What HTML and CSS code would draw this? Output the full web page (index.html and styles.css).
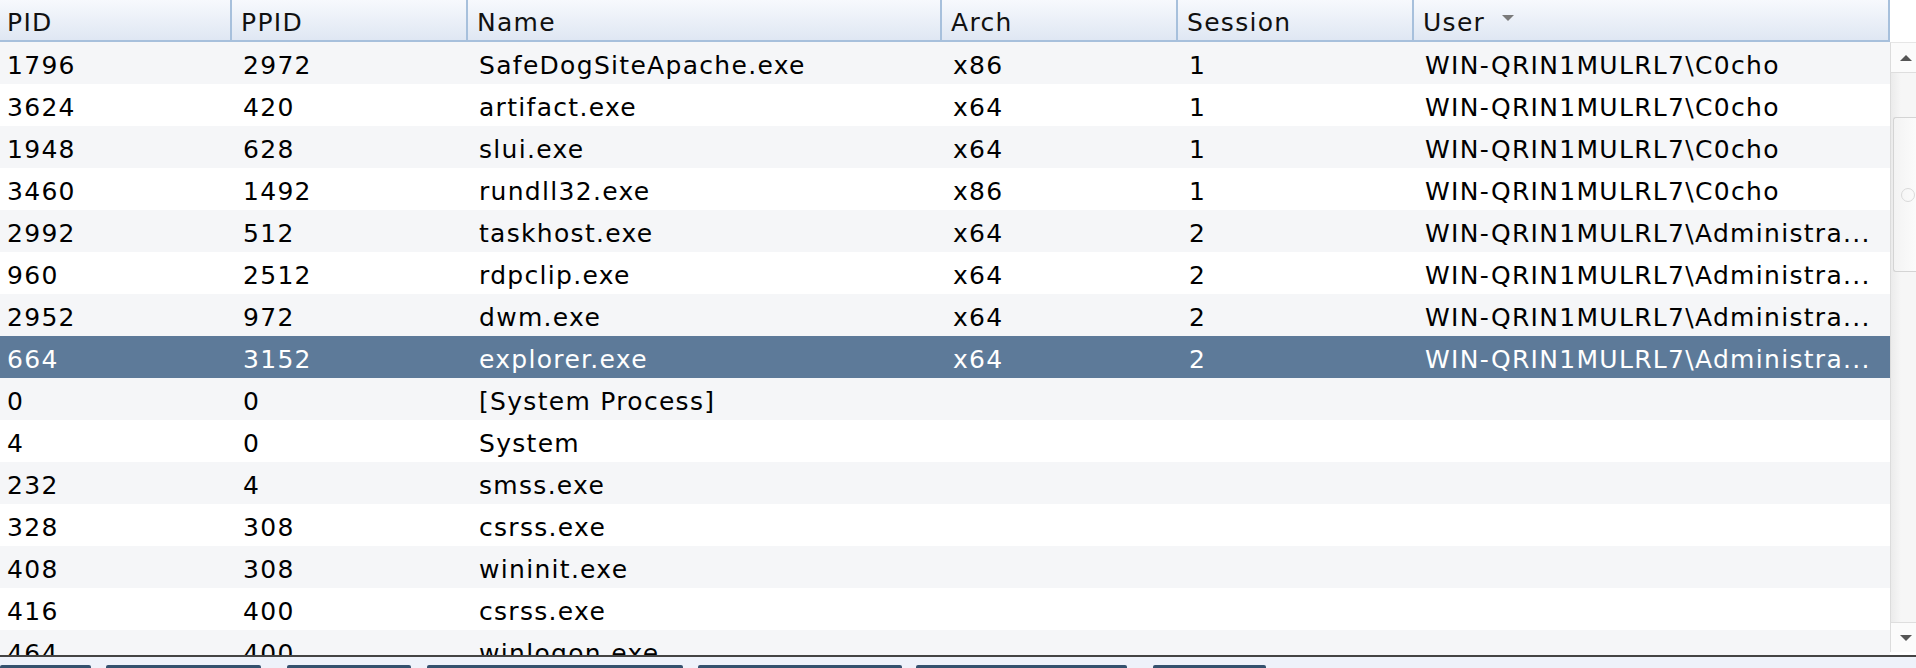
FILE: index.html
```html
<!DOCTYPE html>
<html>
<head>
<meta charset="utf-8">
<link rel="stylesheet" href="styles.css">
</head>
<body>
<div class="main">
  <div class="table">
    <div class="hdr">
      <div class="hc">PID</div>
      <div class="hc">PPID</div>
      <div class="hc">Name</div>
      <div class="hc">Arch</div>
      <div class="hc">Session</div>
      <div class="hc user">User <span class="sort"></span></div>
    </div>
    <div class="row alt"><div class="c">1796</div><div class="c">2972</div><div class="c">SafeDogSiteApache.exe</div><div class="c">x86</div><div class="c">1</div><div class="c">WIN-QRIN1MULRL7\C0cho</div></div>
    <div class="row"><div class="c">3624</div><div class="c">420</div><div class="c">artifact.exe</div><div class="c">x64</div><div class="c">1</div><div class="c">WIN-QRIN1MULRL7\C0cho</div></div>
    <div class="row alt"><div class="c">1948</div><div class="c">628</div><div class="c">slui.exe</div><div class="c">x64</div><div class="c">1</div><div class="c">WIN-QRIN1MULRL7\C0cho</div></div>
    <div class="row"><div class="c">3460</div><div class="c">1492</div><div class="c">rundll32.exe</div><div class="c">x86</div><div class="c">1</div><div class="c">WIN-QRIN1MULRL7\C0cho</div></div>
    <div class="row alt"><div class="c">2992</div><div class="c">512</div><div class="c">taskhost.exe</div><div class="c">x64</div><div class="c">2</div><div class="c">WIN-QRIN1MULRL7\Administra...</div></div>
    <div class="row"><div class="c">960</div><div class="c">2512</div><div class="c">rdpclip.exe</div><div class="c">x64</div><div class="c">2</div><div class="c">WIN-QRIN1MULRL7\Administra...</div></div>
    <div class="row alt"><div class="c">2952</div><div class="c">972</div><div class="c">dwm.exe</div><div class="c">x64</div><div class="c">2</div><div class="c">WIN-QRIN1MULRL7\Administra...</div></div>
    <div class="row sel"><div class="c">664</div><div class="c">3152</div><div class="c">explorer.exe</div><div class="c">x64</div><div class="c">2</div><div class="c">WIN-QRIN1MULRL7\Administra...</div></div>
    <div class="row alt"><div class="c">0</div><div class="c">0</div><div class="c">[System Process]</div><div class="c"></div><div class="c"></div><div class="c"></div></div>
    <div class="row"><div class="c">4</div><div class="c">0</div><div class="c">System</div><div class="c"></div><div class="c"></div><div class="c"></div></div>
    <div class="row alt"><div class="c">232</div><div class="c">4</div><div class="c">smss.exe</div><div class="c"></div><div class="c"></div><div class="c"></div></div>
    <div class="row"><div class="c">328</div><div class="c">308</div><div class="c">csrss.exe</div><div class="c"></div><div class="c"></div><div class="c"></div></div>
    <div class="row alt"><div class="c">408</div><div class="c">308</div><div class="c">wininit.exe</div><div class="c"></div><div class="c"></div><div class="c"></div></div>
    <div class="row"><div class="c">416</div><div class="c">400</div><div class="c">csrss.exe</div><div class="c"></div><div class="c"></div><div class="c"></div></div>
    <div class="row alt"><div class="c">464</div><div class="c">400</div><div class="c">winlogon.exe</div><div class="c"></div><div class="c"></div><div class="c"></div></div>
  </div>
  <div class="sb">
    <div class="sb-top"></div>
    <div class="sb-up"><span class="tri-up"></span></div>
    <div class="sb-track">
      <div class="sb-gap1"></div>
      <div class="sb-thumb"><span class="grip"></span></div>
      <div class="sb-gap2"></div>
    </div>
    <div class="sb-down"><span class="tri-down"></span></div>
  </div>
</div>
<div class="rule"></div>
<div class="bottom">
  <div class="btn b1"></div>
  <div class="btn b2"></div>
  <div class="btn b3"></div>
  <div class="btn b4"></div>
  <div class="btn b5"></div>
  <div class="btn b6"></div>
  <div class="btn b7"></div>
</div>
</body>
</html>
```

FILE: styles.css
```css
html, body {
  margin: 0;
  padding: 0;
  background: #ffffff;
  overflow: hidden;
}
body {
  width: 1916px;
  height: 668px;
  font-family: "DejaVu Sans", "Liberation Sans", sans-serif;
  font-size: 25px;
  letter-spacing: 1.3px;
  color: #000;
}
.main {
  display: flex;
  height: 655px;
  overflow: hidden;
}
.table {
  width: 1890px;
  flex: 0 0 1890px;
  overflow: hidden;
}
.hdr, .row {
  display: grid;
  grid-template-columns: 232px 236px 474px 236px 236px 476px;
}
.hdr {
  height: 42px;
  box-sizing: border-box;
  border-bottom: 2px solid #a7c0dc;
  background: linear-gradient(#f7f9fd, #dfe7f3);
}
.hc {
  box-sizing: border-box;
  height: 40px;
  padding: 5px 0 0 9px;
  line-height: 36px;
  border-right: 2px solid #a7c0dc;
  white-space: nowrap;
  color: #111;
}
.hc:first-child { padding-left: 7px; }
.sort {
  display: inline-block;
  width: 0;
  height: 0;
  margin-left: 8px;
  vertical-align: 10px;
  border-left: 6px solid transparent;
  border-right: 6px solid transparent;
  border-top: 6px solid #7a7a7a;
}
.row {
  height: 42px;
  background: #ffffff;
}
.row.alt { background: #f5f6f8; }
.row.sel { background: #5d7a99; color: #ffffff; }
.c {
  box-sizing: border-box;
  height: 42px;
  padding: 6px 0 0 11px;
  line-height: 36px;
  white-space: nowrap;
  overflow: hidden;
}
.c:first-child { padding-left: 7px; }

.sb {
  flex: 0 0 26px;
  display: flex;
  flex-direction: column;
  background: #ffffff;
}
.sb-top { height: 42px; flex: 0 0 42px; background: #fff; }
.sb-up, .sb-down {
  flex: 0 0 auto;
  display: flex;
  align-items: center;
  justify-content: center;
  background: #fbfbfb;
  border-left: 1px solid #dcdcdc;
  box-sizing: border-box;
}
.sb-up { height: 31px; border-bottom: 1px solid #dedede; border-top: 1px solid #e6e6e6; }
.sb-down { height: 30px; border-top: 1px solid #dedede; margin-bottom: 3px; }
.tri-up, .tri-down {
  width: 0; height: 0;
  border-left: 6px solid transparent;
  border-right: 6px solid transparent;
  margin-left: 4px;
}
.tri-up { border-bottom: 6px solid #555; }
.tri-down { border-top: 6px solid #555; }
.sb-track {
  flex: 1 1 auto;
  display: flex;
  flex-direction: column;
  background: linear-gradient(to right, #ebebeb, #f6f6f6 40%, #f6f6f6);
  border-left: 1px solid #dcdcdc;
}
.sb-gap1 { height: 44px; flex: 0 0 44px; }
.sb-thumb {
  flex: 0 0 155px;
  box-sizing: border-box;
  margin-left: 2px;
  border: 1px solid #d4d4d4;
  border-right: none;
  border-radius: 3px 0 0 3px;
  background: linear-gradient(to right, #f3f3f3, #fbfbfb);
  display: flex;
  align-items: center;
  justify-content: center;
}
.grip {
  width: 12px; height: 12px;
  border: 1px solid #dadada;
  border-radius: 50%;
  margin-left: 6px;
}
.sb-gap2 { flex: 1 1 auto; }

.rule {
  height: 2px;
  background: #444444;
}
.bottom {
  height: 11px;
  background: #eef2fa;
  display: flex;
  align-items: flex-end;
  overflow: hidden;
}
.btn {
  height: 3px;
  background: #34516e;
  border-radius: 2px 2px 0 0;
  flex: 0 0 auto;
}
.b1 { width: 91px; }
.b2 { width: 155px; margin-left: 15px; }
.b3 { width: 124px; margin-left: 26px; }
.b4 { width: 256px; margin-left: 16px; }
.b5 { width: 204px; margin-left: 15px; }
.b6 { width: 211px; margin-left: 14px; }
.b7 { width: 113px; margin-left: 26px; }
```
